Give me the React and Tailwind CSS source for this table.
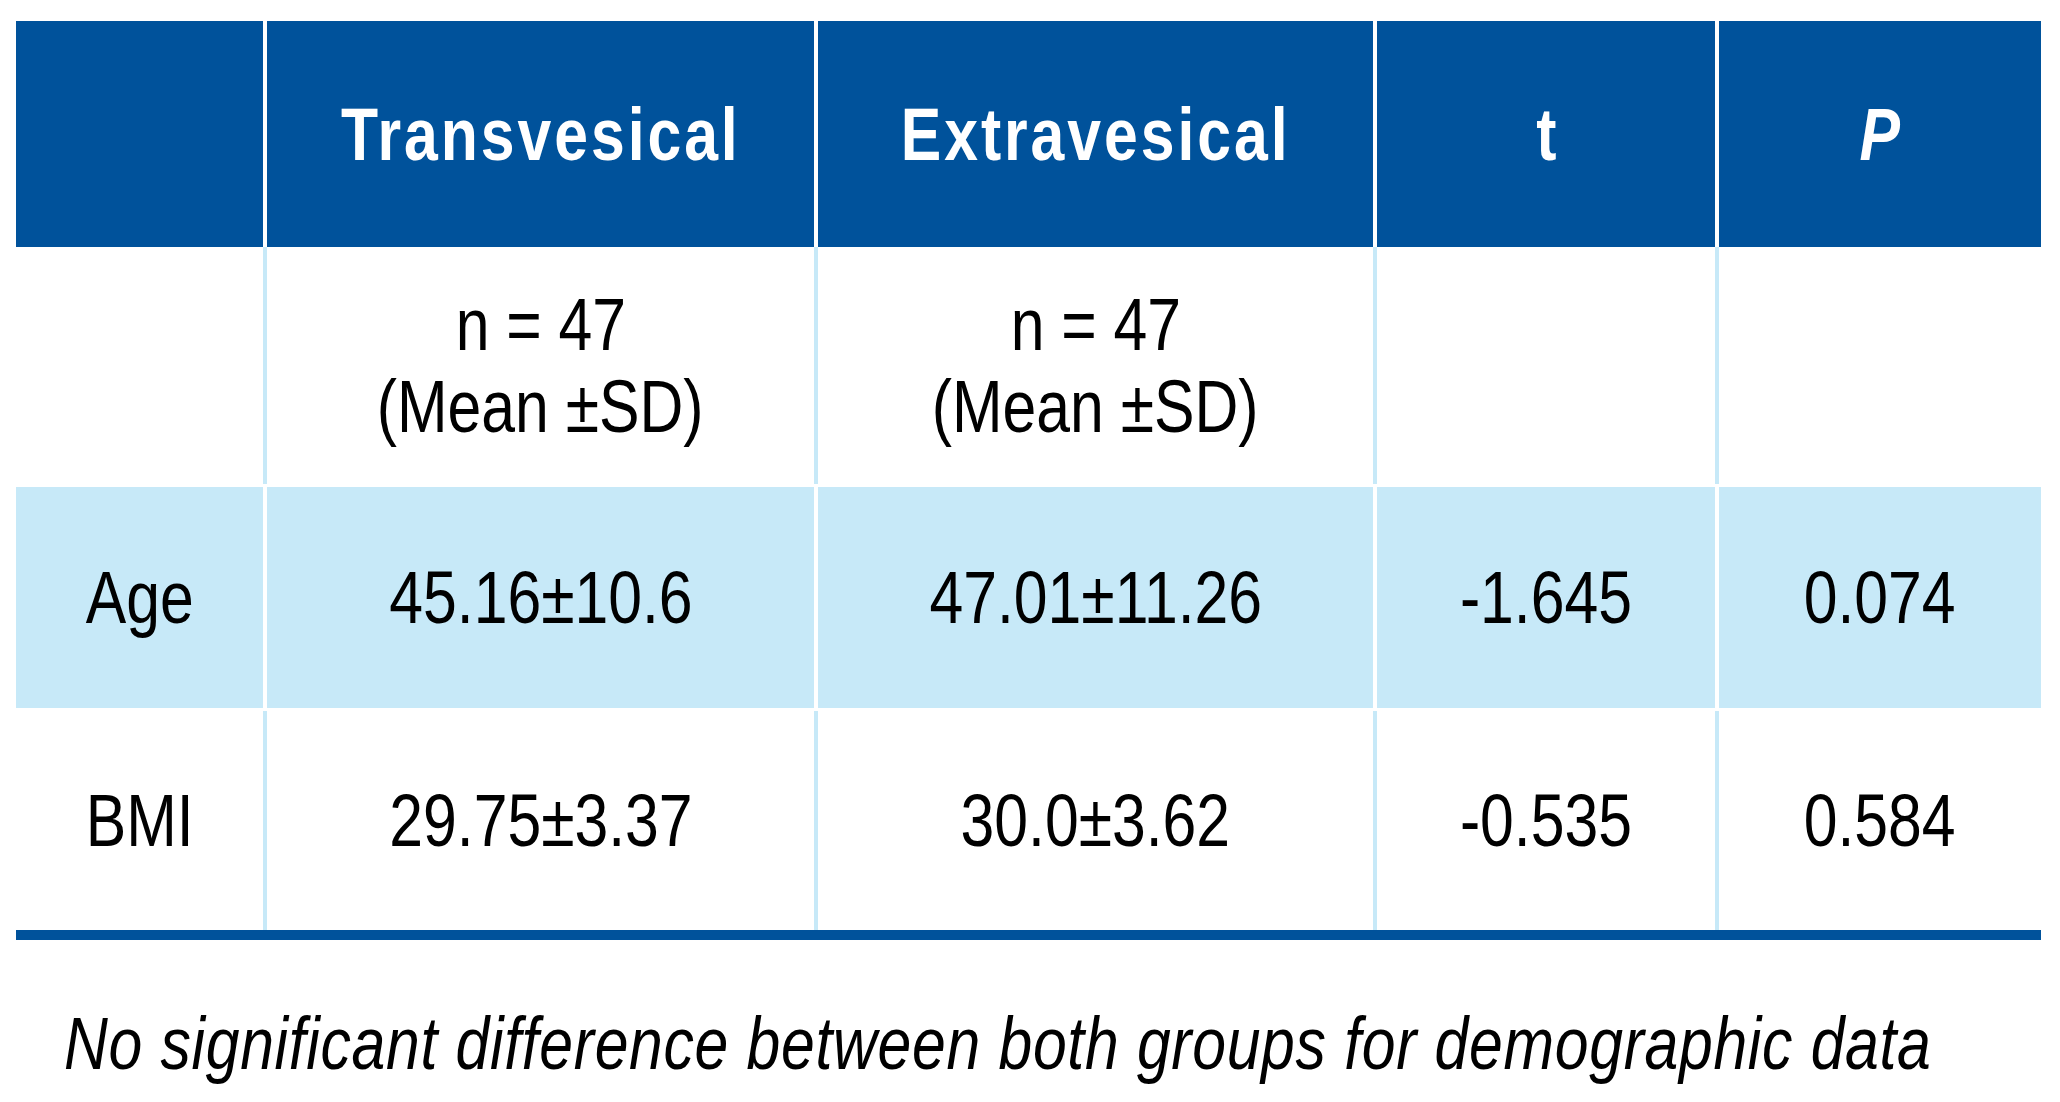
import React from "react";

const font = { fontFamily: '"Liberation Sans", Arial, sans-serif' };

const cols = "grid grid-cols-[247px_547px_555px_338px_322px] gap-x-[4px]";

const rows = [
    { label: "Age", trans: "45.16±10.6", extra: "47.01±11.26", t: "-1.645", p: "0.074", shaded: true },
    { label: "BMI", trans: "29.75±3.37", extra: "30.0±3.62", t: "-0.535", p: "0.584", shaded: false },
];

// condensed look: Liberation Sans squeezed to Arial Narrow proportions
const Narrow = ({ children, className = "" }) => (
    <span className={`inline-block whitespace-nowrap scale-x-[0.82] ${className}`}>{children}</span>
);

const DemographicTable = () => {
    return (
        <div className="min-h-screen bg-white pt-[21px] pl-[16px] text-black overflow-hidden" style={font}>
            <div className="w-[2025px]">
                {/* header */}
                <div className={`${cols} bg-white h-[226px]`}>
                    <div className="bg-[#00529b]"></div>
                    <div className="bg-[#00529b] flex items-center justify-center text-white font-bold text-[74px]">
                        <Narrow className="tracking-[3.6px]">Transvesical</Narrow>
                    </div>
                    <div className="bg-[#00529b] flex items-center justify-center text-white font-bold text-[74px]">
                        <Narrow className="tracking-[3.6px]">Extravesical</Narrow>
                    </div>
                    <div className="bg-[#00529b] flex items-center justify-center text-white font-bold text-[74px]">
                        <Narrow>t</Narrow>
                    </div>
                    <div className="bg-[#00529b] flex items-center justify-center text-white font-bold italic text-[74px]">
                        <Narrow>P</Narrow>
                    </div>
                </div>

                {/* n row */}
                <div className={`${cols} bg-[#c7e9f8] h-[237px]`}>
                    <div className="bg-white"></div>
                    <div className="bg-white flex flex-col items-center justify-center text-[74px] leading-[82px]">
                        <Narrow>n = 47</Narrow>
                        <Narrow>(Mean ±SD)</Narrow>
                    </div>
                    <div className="bg-white flex flex-col items-center justify-center text-[74px] leading-[82px]">
                        <Narrow>n = 47</Narrow>
                        <Narrow>(Mean ±SD)</Narrow>
                    </div>
                    <div className="bg-white"></div>
                    <div className="bg-white"></div>
                </div>

                {rows.map((row) => (
                    <div
                        key={row.label}
                        className={`${cols} mt-[3px] ${row.shaded ? "bg-white h-[221px]" : "bg-[#c7e9f8] h-[219px]"}`}
                    >
                        {[row.label, row.trans, row.extra, row.t, row.p].map((v, i) => (
                            <div
                                key={i}
                                className={`flex items-center justify-center text-[74px] ${row.shaded ? "bg-[#c7e9f8]" : "bg-white"}`}
                            >
                                <Narrow>{v}</Narrow>
                            </div>
                        ))}
                    </div>
                ))}

                <div className="h-[10px] bg-[#00529b]"></div>
            </div>

            <p className="mt-[67px] pl-[48px] italic text-[74px] leading-[74px] whitespace-nowrap">
                <Narrow className="origin-left tracking-[0.85px]">
                    No significant difference between both groups for demographic data
                </Narrow>
            </p>
        </div>
    );
};

export default DemographicTable;
